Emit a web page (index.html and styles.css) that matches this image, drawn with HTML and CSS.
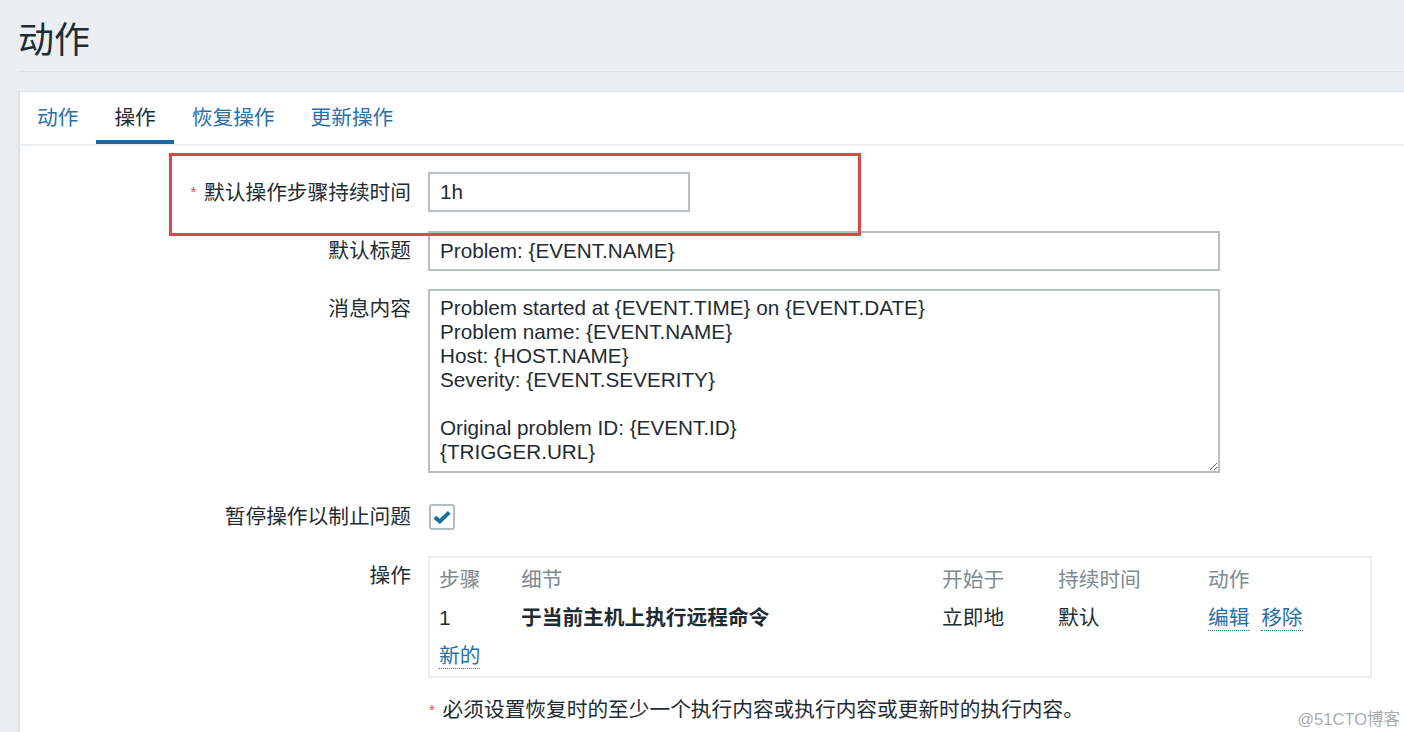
FILE: index.html
```html
<!DOCTYPE html>
<html lang="zh-CN">
<head>
    <meta charset="UTF-8">
    <title>动作</title>
    <link rel="stylesheet" href="styles.css">
</head>
<body>
<div id="page">
    <h1 class="title">动作</h1>
    <div class="panel">
        <ul class="tabs">
            <li><a href="#">动作</a></li>
            <li class="selected"><a href="#">操作</a></li>
            <li><a href="#">恢复操作</a></li>
            <li><a href="#">更新操作</a></li>
        </ul>
        <div class="form">
            <div class="row row-duration">
                <label class="label"><span class="req">*</span> 默认操作步骤持续时间</label>
                <div class="field"><input class="input input-short" type="text" value="1h"></div>
            </div>
            <div class="row row-subject">
                <label class="label">默认标题</label>
                <div class="field"><input class="input input-long" type="text" value="Problem: {EVENT.NAME}"></div>
            </div>
            <div class="row row-message">
                <label class="label">消息内容</label>
                <div class="field"><textarea class="input textarea">Problem started at {EVENT.TIME} on {EVENT.DATE}
Problem name: {EVENT.NAME}
Host: {HOST.NAME}
Severity: {EVENT.SEVERITY}

Original problem ID: {EVENT.ID}
{TRIGGER.URL}</textarea></div>
            </div>
            <div class="row row-pause">
                <label class="label">暂停操作以制止问题</label>
                <div class="field">
                    <span class="checkbox">
                        <svg width="18" height="14" viewBox="0 0 18 14"><path d="M1.8 7.2 L6.8 11.4 L16.2 2.4" fill="none" stroke="#17709e" stroke-width="4"/></svg>
                    </span>
                </div>
            </div>
            <div class="row row-ops">
                <label class="label">操作</label>
                <div class="field">
                    <div class="ops">
                        <div class="ops-row ops-head">
                            <span>步骤</span>
                            <span>细节</span>
                            <span>开始于</span>
                            <span>持续时间</span>
                            <span>动作</span>
                        </div>
                        <div class="ops-row">
                            <span>1</span>
                            <span class="bold">于当前主机上执行远程命令</span>
                            <span>立即地</span>
                            <span>默认</span>
                            <span><a class="link" href="#">编辑</a> <a class="link" href="#">移除</a></span>
                        </div>
                        <div class="ops-row">
                            <span class="wide"><a class="link" href="#">新的</a></span>
                        </div>
                    </div>
                </div>
            </div>
            <div class="row row-note">
                <span class="label"></span>
                <div class="field note"><span class="req">*</span> 必须设置恢复时的至少一个执行内容或执行内容或更新时的执行内容。</div>
            </div>
        </div>
    </div>
</div>
<!-- 截图上的红框标注 -->
<div class="mark"></div>
<div class="watermark">@51CTO博客</div>
</body>
</html>
```

FILE: styles.css
```css
*{
    margin: 0;
    padding: 0;
    box-sizing: border-box;
}
li{
    list-style: none;
}
a{
    text-decoration: none;
}
body{
    background-color: #ebeef1;
    font-family: "Liberation Sans", "Noto Sans CJK SC", sans-serif;
    font-size: 20.7px;
    color: #1f2c33;
    overflow: hidden;
}
#page{
    padding-left: 18px;
}
.title{
    font-size: 36px;
    font-weight: normal;
    line-height: 36px;
    padding: 23px 0 12px 0;
    border-bottom: 1px solid #dce1e4;
    color: #1f2c33;
}
.panel{
    margin-top: 19px;
    background-color: #fff;
    border-top: 1px solid #dfe4e7;
    border-left: 2px solid #dbe0e3;
    height: 641px;
}
.tabs{
    display: flex;
    height: 54px;
    border-bottom: 2px solid #ebeef1;
    margin-left: -1px;
}
.tabs li{
    height: 52px;
    line-height: 52px;
    padding: 0 18px;
}
.tabs a{
    color: #2a70a6;
}
.tabs .selected{
    box-shadow: inset 0 -4px 0 #1a6aa8;
}
.tabs .selected a{
    color: #1f2c33;
}
.form{
    padding-top: 26px;
}
.row{
    display: grid;
    grid-template-columns: 391px 1fr;
    column-gap: 17px;
}
.label{
    text-align: right;
    line-height: 40px;
    white-space: nowrap;
}
.req{
    color: #e0474c;
    font-size: 15px;
    vertical-align: 3px;
    margin-right: 2px;
}
.row-duration, .row-subject{
    margin-bottom: 18px;
}
.row-message{
    margin-bottom: 24px;
}
.row-pause{
    margin-bottom: 19px;
}
.row-ops{
    margin-bottom: 20px;
}
.input{
    display: block;
    height: 40px;
    border: 2px solid #b7bfc4;
    padding: 0 10px;
    font-family: "Liberation Sans", "Noto Sans CJK SC", sans-serif;
    font-size: 20.7px;
    color: #1f2c33;
    background-color: #fff;
    outline: none;
}
.input-short{
    width: 262px;
}
.input-long{
    width: 792px;
}
.textarea{
    width: 792px;
    height: 184px;
    padding: 5px 10px;
    line-height: 24px;
}
.row-pause .field{
    display: flex;
    align-items: center;
    height: 40px;
}
.checkbox{
    display: flex;
    align-items: center;
    justify-content: center;
    width: 26px;
    height: 26px;
    margin-left: 1px;
    border: 2px solid #b3bcc1;
    border-radius: 3px;
    background-color: #fff;
}
.ops{
    width: 944px;
    border: 2px solid #ebeef1;
    padding: 3px 9px 1px 9px;
}
.ops-row{
    display: grid;
    grid-template-columns: 82px 421px 116px 150px 1fr;
    height: 38px;
    line-height: 38px;
}
.ops-head{
    color: #7d8a91;
}
.ops-row .wide{
    grid-column: 1 / 6;
}
.bold{
    font-weight: bold;
}
.link{
    color: #2a70a6;
    border-bottom: 1px dotted #2a70a6;
    padding-bottom: 1px;
    margin-right: 6px;
}
.note{
    line-height: 24px;
    padding-left: 1px;
}
.note .req{
    vertical-align: 2px;
}
.mark{
    position: absolute;
    left: 169px;
    top: 153px;
    width: 692px;
    height: 83px;
    border: 3px solid #df4549;
}
.watermark{
    position: absolute;
    right: 4px;
    top: 706px;
    font-size: 16.5px;
    color: #a9acae;
}
```
